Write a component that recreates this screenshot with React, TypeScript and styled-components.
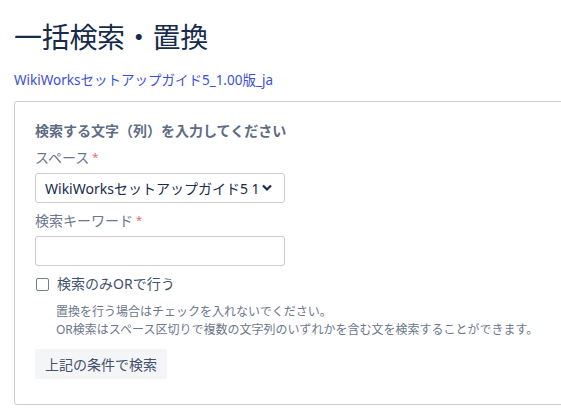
import React from "react";
import styled, { createGlobalStyle } from "styled-components";

const GlobalStyle = createGlobalStyle`
  body {
    margin: 0;
    background: #ffffff;
    font-family: "Noto Sans", "Noto Sans CJK JP", sans-serif;
    color: #172b4d;
  }
`;

const Page = styled.main`
  padding: 20px 0 0 14px;
  overflow: hidden;
`;

const Title = styled.h1`
  margin: 0;
  font-size: 28px;
  font-weight: 400;
  line-height: 34px;
  color: #172b4d;
  letter-spacing: -0.3px;
`;

const SpaceLink = styled.a`
  display: block;
  margin-top: 16px;
  font-size: 13.5px;
  line-height: 20px;
  color: #3d4fd8;
  text-decoration: none;
`;

const Panel = styled.section`
  margin-top: 11px;
  width: 600px;
  border: 1px solid #cccccc;
  border-radius: 3px;
  padding: 19px 20px 25px;
`;

const Heading = styled.h2`
  margin: 0;
  font-size: 14px;
  font-weight: 700;
  line-height: 20px;
  color: #5e6c84;
`;

const Label = styled.label`
  display: block;
  font-size: 14px;
  line-height: 20px;
  color: #6b778c;
  margin-top: ${(p: { $gap: number }) => p.$gap}px;
`;

const Required = styled.span`
  color: #e26b6b;
  margin-left: 3px;
  font-size: 11px;
  vertical-align: 2px;
`;

const SelectWrap = styled.div`
  position: relative;
  width: 250px;
  margin-top: 5px;
`;

const Select = styled.select`
  appearance: none;
  width: 100%;
  height: 30px;
  box-sizing: border-box;
  border: 1px solid #cccccc;
  border-radius: 3px;
  background: #fff;
  padding: 0 24px 0 9px;
  font-family: inherit;
  font-size: 14px;
  color: #172b4d;
  text-overflow: clip;
`;

const Chevron = styled.svg`
  position: absolute;
  right: 13px;
  top: 11px;
  pointer-events: none;
`;

const TextInput = styled.input`
  display: block;
  width: 250px;
  height: 30px;
  box-sizing: border-box;
  margin-top: 5px;
  border: 1px solid #cccccc;
  border-radius: 3px;
`;

const CheckRow = styled.label`
  display: flex;
  align-items: center;
  gap: 8px;
  margin-top: 8px;
  font-size: 14px;
  line-height: 20px;
  color: #42526e;
`;

const Box = styled.span`
  width: 11px;
  height: 11px;
  margin-left: 1px;
  border: 1px solid #767e8c;
  border-radius: 2px;
`;

const Help = styled.div`
  margin: 9px 0 0 21px;
  font-size: 12px;
  line-height: 18px;
  color: #6b778c;
  white-space: nowrap;
`;

const Button = styled.button`
  margin-top: 10px;
  height: 30px;
  padding: 0 10px;
  border: none;
  border-radius: 3px;
  background: #f4f5f7;
  font-family: inherit;
  font-size: 14px;
  color: #42526e;
`;

const App = () => {
  return (
    <>
      <GlobalStyle />
      <Page>
        <Title>一括検索・置換</Title>
        <SpaceLink href="#">WikiWorksセットアップガイド5_1.00版_ja</SpaceLink>
        <Panel>
          <Heading>検索する文字（列）を入力してください</Heading>
          <Label $gap={6}>
            スペース<Required>*</Required>
          </Label>
          <SelectWrap>
            <Select defaultValue="ja">
              <option value="ja">WikiWorksセットアップガイド5 1.00版_ja</option>
            </Select>
            <Chevron width="10" height="8" viewBox="0 0 10 8">
              <path d="M1 1.5 L5 5.5 L9 1.5" fill="none" stroke="#172b4d" strokeWidth="2.2" />
            </Chevron>
          </SelectWrap>
          <Label $gap={7}>
            検索キーワード<Required>*</Required>
          </Label>
          <TextInput type="text" />
          <CheckRow>
            <Box />
            検索のみORで行う
          </CheckRow>
          <Help>
            置換を行う場合はチェックを入れないでください。
            <br />
            OR検索はスペース区切りで複数の文字列のいずれかを含む文を検索することができます。
          </Help>
          <Button>上記の条件で検索</Button>
        </Panel>
      </Page>
    </>
  );
};

export default App;
